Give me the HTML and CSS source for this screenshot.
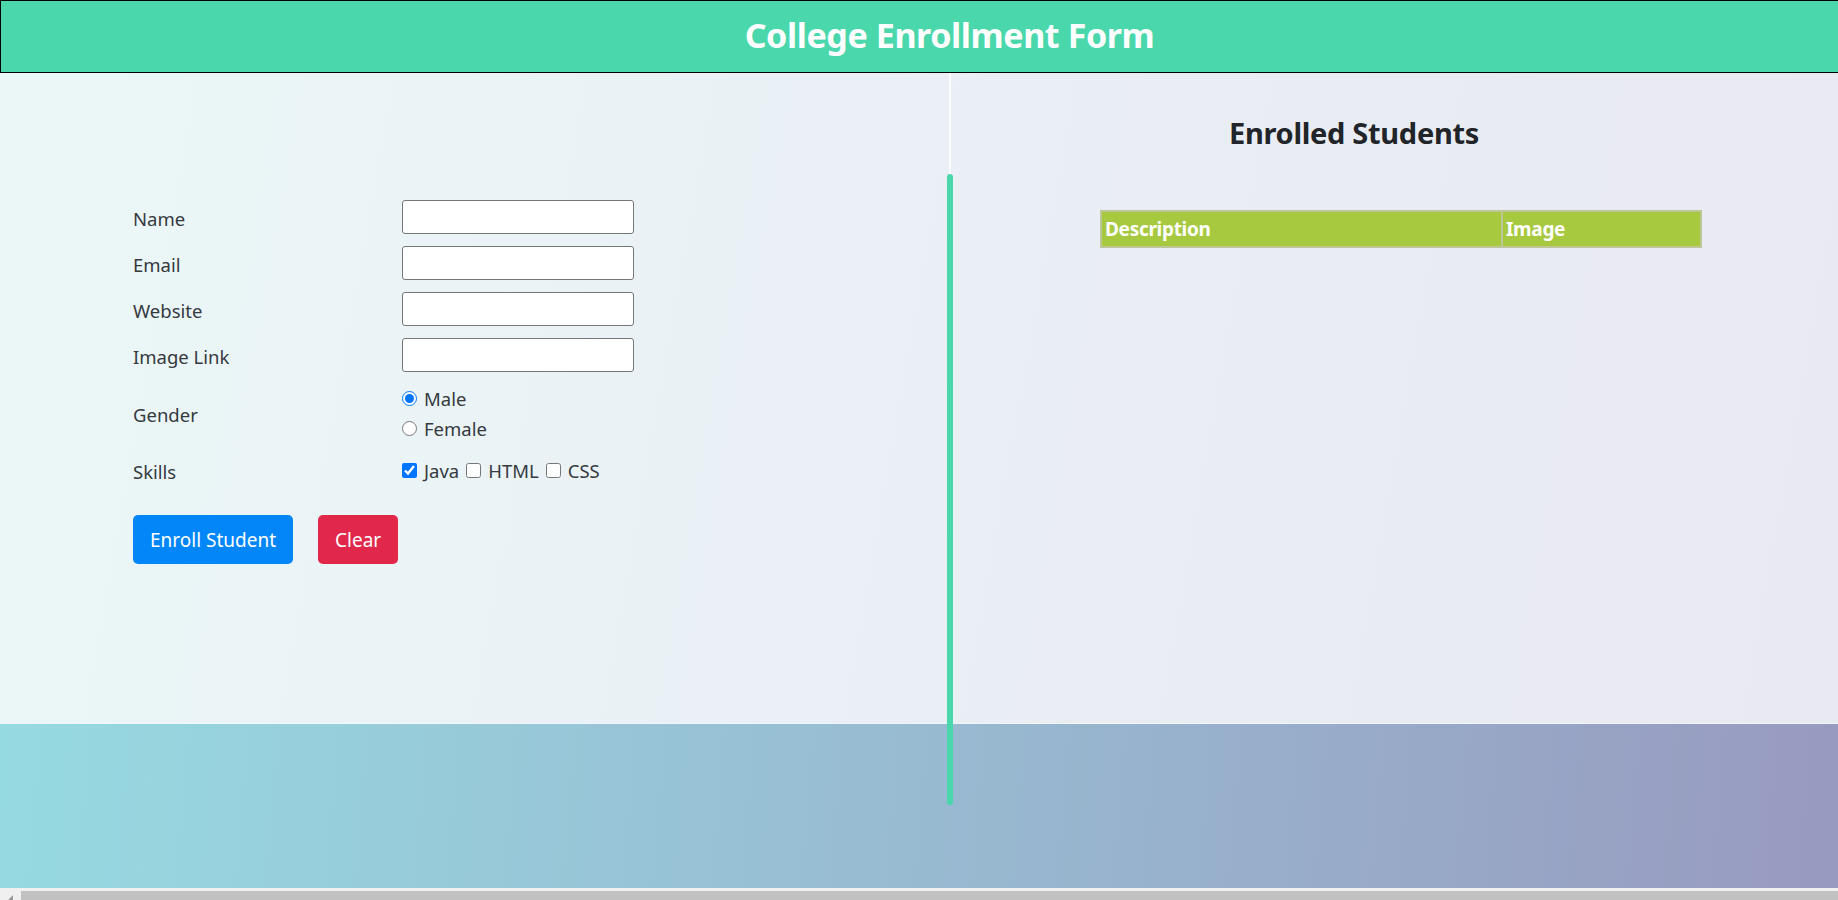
FILE: index.html
```html
<!DOCTYPE html>
<html lang="en">
<head>
<meta charset="utf-8">
<title>College Enrollment Form</title>
<link rel="stylesheet" href="styles.css">
</head>
<body>
<div class="page">
  <header class="topbar">
    <h1 class="title">College Enrollment Form</h1>
  </header>
  <main class="main">
    <section class="left">
      <form class="form">
        <div class="row">
          <label class="lbl" for="name">Name</label>
          <input class="field" type="text" id="name">
        </div>
        <div class="row">
          <label class="lbl" for="email">Email</label>
          <input class="field" type="text" id="email">
        </div>
        <div class="row">
          <label class="lbl" for="web">Website</label>
          <input class="field" type="text" id="web">
        </div>
        <div class="row">
          <label class="lbl" for="img">Image Link</label>
          <input class="field" type="text" id="img">
        </div>
        <div class="row row-gender">
          <span class="lbl">Gender</span>
          <div class="opts">
            <label class="opt"><input class="radio" type="radio" name="g" checked>Male</label>
            <label class="opt"><input class="radio" type="radio" name="g">Female</label>
          </div>
        </div>
        <div class="row row-skills">
          <span class="lbl">Skills</span>
          <div class="checks">
            <label class="chk"><input class="box" type="checkbox" checked>Java</label>
            <label class="chk"><input class="box" type="checkbox">HTML</label>
            <label class="chk"><input class="box" type="checkbox">CSS</label>
          </div>
        </div>
        <div class="actions">
          <button type="button" class="btn btn-primary">Enroll Student</button>
          <button type="button" class="btn btn-danger">Clear</button>
        </div>
      </form>
    </section>
    <section class="right">
      <h2 class="subtitle">Enrolled Students</h2>
      <table class="students">
        <thead>
          <tr>
            <th class="col-desc">Description</th>
            <th class="col-img">Image</th>
          </tr>
        </thead>
      </table>
    </section>
  </main>
  <div class="band"></div>
  <div class="hscroll">
    <div class="hscroll-btn"><span class="hscroll-arrow"></span></div>
    <div class="hscroll-thumb"></div>
  </div>
  <div class="vline"></div>
</div>
</body>
</html>
```
FILE: styles.css
```css
* { box-sizing: border-box; }
html, body { margin: 0; padding: 0; }
body {
  font-family: "Noto Sans", "Open Sans", sans-serif;
  color: #212529;
  overflow: hidden;
}
.page {
  position: relative;
  width: 1838px;
  height: 900px;
  display: flex;
  flex-direction: column;
  background: linear-gradient(95deg, #96dce2 0%, #98bfd4 45%, #989abf 100%);
}
.topbar {
  height: 73px;
  background: #4bd7ac;
  border: 1px solid #000;
  border-right: 0;
  display: flex;
  align-items: center;
  justify-content: center;
  padding: 0 0 3px 60px;
}
.title {
  margin: 0;
  color: #fff;
  font-size: 34px;
  font-weight: 700;
  letter-spacing: -0.4px;
}
.main {
  height: 651px;
  display: flex;
  background: linear-gradient(100deg, #ebf7f7 0%, #eaf1f6 40%, #e9ecf3 70%, #e9e9f2 100%);
  border-bottom: 1px solid #f2f6f8;
}
.left {
  width: 949px;
  flex: none;
}
.right {
  flex: 1;
  border-left: 2px solid #fbfcfd;
  display: flex;
  flex-direction: column;
}
.form {
  padding: 127px 0 0 133px;
  display: flex;
  flex-direction: column;
  font-size: 18.5px;
  color: #353a3f;
}
.row {
  display: flex;
  align-items: center;
  height: 34px;
  margin-bottom: 12px;
}
.lbl {
  width: 269px;
  flex: none;
  padding-top: 3px;
}
.field {
  width: 232px;
  height: 34px;
  border: 1px solid #767676;
  border-radius: 3px;
  background: #fff;
  margin: 0;
}
.row-gender {
  height: 60px;
  margin-top: -1px;
}
.opts {
  display: flex;
  flex-direction: column;
}
.opt {
  display: flex;
  align-items: center;
  height: 30px;
}
.radio {
  width: 15px;
  height: 15px;
  margin: 0 7px 0 0;
}
.row-skills {
  height: 26px;
  margin-top: 2px;
}
.checks {
  display: flex;
  align-items: center;
}
.chk {
  display: flex;
  align-items: center;
  margin-right: 7px;
}
.box {
  width: 15px;
  height: 15px;
  margin: 0 7px 0 0;
}
.actions {
  display: flex;
  gap: 25px;
  margin-top: 20px;
}
.btn {
  height: 49px;
  padding: 0 17px;
  border: 0;
  border-radius: 5px;
  color: #fff;
  font-family: inherit;
  font-size: 19px;
}
.btn-primary { background: #0387f8; }
.btn-danger { background: #e1284a; }
.subtitle {
  margin: 40px 0 0 0;
  width: 806px;
  text-align: center;
  font-size: 29px;
  font-weight: 700;
  color: #212529;
  letter-spacing: -0.3px;
}
.students {
  margin: 58px 0 0 149px;
  width: 602px;
  border-collapse: collapse;
  border: 2px solid #bec695;
  background: #a7c940;
}
.students th {
  height: 36px;
  padding: 0 3px;
  text-align: left;
  color: #fff;
  font-size: 19px;
  font-weight: 700;
  letter-spacing: -0.3px;
}
.col-desc { width: 401px; }
.col-img { border-left: 2px solid #bec695; }
.band {
  height: 164px;
}
.hscroll {
  height: 12px;
  background: #f0f0f0;
  display: flex;
}
.hscroll-btn {
  width: 21px;
  flex: none;
  position: relative;
}
.hscroll-arrow {
  position: absolute;
  left: 8px;
  bottom: 0;
  width: 0;
  height: 0;
  border-right: 5px solid #9a9a9a;
  border-top: 5px solid transparent;
}
.hscroll-thumb {
  flex: 1;
  margin-top: 3px;
  background: #c1c1c1;
}
.vline {
  position: absolute;
  left: 947px;
  top: 174px;
  width: 6px;
  height: 631px;
  border-radius: 3px;
  background: #4bd7ac;
}
```
